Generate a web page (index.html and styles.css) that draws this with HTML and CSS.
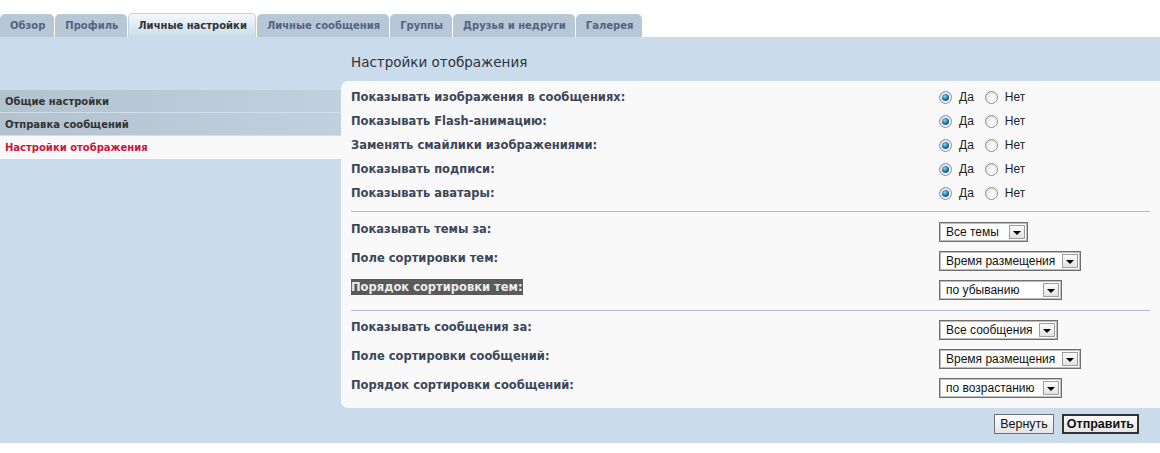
FILE: index.html
```html
<!DOCTYPE html>
<html>
<head>
	<meta charset="utf-8">
	<title>Личный раздел — Настройки отображения</title>
	<link rel="stylesheet" href="styles.css">
</head>
<body>
	<ul class="tabs">
		<li><a>Обзор</a></li>
		<li><a>Профиль</a></li>
		<li class="active"><a>Личные настройки</a></li>
		<li><a>Личные сообщения</a></li>
		<li><a>Группы</a></li>
		<li><a>Друзья и недруги</a></li>
		<li><a>Галерея</a></li>
	</ul>

	<div class="cp-main">
		<div class="cp-menu">
			<ul class="nav">
				<li><a>Общие настройки</a></li>
				<li><a>Отправка сообщений</a></li>
				<li class="active"><a>Настройки отображения</a></li>
			</ul>
		</div>

		<div class="cp-content">
			<h2>Настройки отображения</h2>

			<div class="panel">
				<div class="group group-radios">
					<div class="row">
						<span class="label">Показывать изображения в сообщениях:</span>
						<span class="choices"><span class="radio checked"></span><span class="opt">Да</span><span class="radio"></span><span class="opt">Нет</span></span>
					</div>
					<div class="row">
						<span class="label">Показывать Flash-анимацию:</span>
						<span class="choices"><span class="radio checked"></span><span class="opt">Да</span><span class="radio"></span><span class="opt">Нет</span></span>
					</div>
					<div class="row">
						<span class="label">Заменять смайлики изображениями:</span>
						<span class="choices"><span class="radio checked"></span><span class="opt">Да</span><span class="radio"></span><span class="opt">Нет</span></span>
					</div>
					<div class="row">
						<span class="label">Показывать подписи:</span>
						<span class="choices"><span class="radio checked"></span><span class="opt">Да</span><span class="radio"></span><span class="opt">Нет</span></span>
					</div>
					<div class="row">
						<span class="label">Показывать аватары:</span>
						<span class="choices"><span class="radio checked"></span><span class="opt">Да</span><span class="radio"></span><span class="opt">Нет</span></span>
					</div>
				</div>

				<hr class="sep">

				<div class="group group-selects">
					<div class="row">
						<span class="label">Показывать темы за:</span>
						<span class="select sel-days-topics"><span class="sel-text">Все темы</span><span class="arrow"></span></span>
					</div>
					<div class="row">
						<span class="label">Поле сортировки тем:</span>
						<span class="select sel-key"><span class="sel-text">Время размещения</span><span class="arrow"></span></span>
					</div>
					<div class="row">
						<span class="label"><span class="marked">Порядок сортировки тем:</span></span>
						<span class="select sel-dir"><span class="sel-text">по убыванию</span><span class="arrow"></span></span>
					</div>
				</div>

				<hr class="sep">

				<div class="group group-selects">
					<div class="row">
						<span class="label">Показывать сообщения за:</span>
						<span class="select sel-days-posts"><span class="sel-text">Все сообщения</span><span class="arrow"></span></span>
					</div>
					<div class="row">
						<span class="label">Поле сортировки сообщений:</span>
						<span class="select sel-key"><span class="sel-text">Время размещения</span><span class="arrow"></span></span>
					</div>
					<div class="row">
						<span class="label">Порядок сортировки сообщений:</span>
						<span class="select sel-dir"><span class="sel-text">по возрастанию</span><span class="arrow"></span></span>
					</div>
				</div>
			</div>

			<div class="submit-row">
				<button class="btn">Вернуть</button>
				<button class="btn btn-main">Отправить</button>
			</div>
		</div>
	</div>
</body>
</html>
```

FILE: styles.css
```css
* {
	box-sizing: border-box;
}

body {
	margin: 0;
	padding-top: 13px;
	background-color: #ffffff;
	font-family: "DejaVu Sans", Verdana, sans-serif;
	color: #333333;
}

/* tabs */
.tabs {
	display: flex;
	align-items: flex-end;
	list-style: none;
	margin: 0;
	padding: 0;
	height: 24px;
}

.tabs li {
	margin-right: 1px;
}

.tabs a {
	display: block;
	height: 23px;
	line-height: 23px;
	padding: 0 9px 0 10px;
	font-size: 10px;
	font-weight: bold;
	color: #536482;
	background-color: #b7c7d6;
	border-radius: 5px 5px 0 0;
}

.tabs li.active a {
	height: 24px;
	line-height: 24px;
	color: #333333;
	background: linear-gradient(#f4f8fc, #cadceb);
	border: 1px solid #c4d3e1;
	border-bottom: none;
	padding: 0 8px 0 9px;
}

/* main area */
.cp-main {
	display: flex;
	background-color: #cadceb;
	height: 406px;
}

.cp-menu {
	width: 341px;
	flex-shrink: 0;
	padding-top: 53px;
}

.nav {
	list-style: none;
	margin: 0;
	padding: 0;
}

.nav li a {
	display: block;
	height: 23px;
	line-height: 23px;
	padding-left: 5px;
	font-size: 10px;
	font-weight: bold;
	color: #333333;
	background: linear-gradient(to right, #b2c2cf, #c0d0de);
	border-bottom: 1px solid #d2dee8;
}

.nav li.active a {
	background: #f9f9f9;
	color: #c8173f;
	border-bottom: none;
}

.cp-content {
	flex-grow: 1;
	display: flex;
	flex-direction: column;
}

.cp-content h2 {
	margin: 15px 0 9px 10px;
	height: 20px;
	line-height: 20px;
	font-size: 13.5px;
	font-weight: normal;
	color: #2d333d;
}

.panel {
	background-color: #f9f9f9;
	border-radius: 7px 0 0 7px;
	padding: 4px 10px 5px 10px;
}

.row {
	display: flex;
}

.label {
	width: 588px;
	flex-shrink: 0;
	font-size: 11.5px;
	font-weight: bold;
	color: #3c4658;
}

.group-radios .row {
	height: 24px;
	align-items: center;
}

.group-selects .row {
	height: 29px;
	align-items: flex-start;
	padding-top: 4px;
}

.group-selects .label {
	line-height: 15px;
}

.marked {
	background-color: #5a5a5a;
	color: #ececec;
	padding: 1px 0;
}

.sep {
	border: none;
	border-top: 1px solid #b4bcc6;
	margin: 6px 0;
	height: 0;
}

.group-selects + .sep {
	margin: 5px 0;
}

/* radio buttons */
.choices {
	display: flex;
	align-items: center;
	font-family: "Liberation Sans", Arial, sans-serif;
	font-size: 12px;
	color: #222222;
}

.radio {
	width: 13px;
	height: 13px;
	border-radius: 50%;
	border: 1px solid #8e8f8f;
	background: radial-gradient(circle at 60% 65%, #ffffff 20%, #dcdcdc 80%);
	display: flex;
	align-items: center;
	justify-content: center;
	margin-right: 7px;
}

.radio.checked::after {
	content: "";
	width: 7px;
	height: 7px;
	border-radius: 50%;
	background: radial-gradient(circle at 40% 35%, #8ed2f4, #1c6aa3 55%, #0e3f66);
}

.opt {
	margin-right: 11px;
}

/* selects */
.select {
	display: flex;
	align-items: center;
	height: 20px;
	border: 1px solid #6f6f6f;
	box-shadow: inset 0 0 0 1px #bdbdbd;
	background-color: #ffffff;
	padding: 0 2px 0 6px;
	font-family: "Liberation Sans", Arial, sans-serif;
	font-size: 12px;
	color: #111111;
}

.sel-text {
	flex-grow: 1;
	white-space: nowrap;
}

.arrow {
	width: 16px;
	height: 14px;
	border: 1px solid #9d9d9d;
	background: linear-gradient(#fbfbfb, #e2e2e2);
	display: flex;
	align-items: center;
	justify-content: center;
	margin-left: 3px;
}

.arrow::after {
	content: "";
	border-left: 4px solid transparent;
	border-right: 4px solid transparent;
	border-top: 4px solid #000000;
	margin-top: 2px;
}

.sel-days-topics { width: 89px; }
.sel-key { width: 142px; }
.sel-dir { width: 123px; }
.sel-days-posts { width: 119px; }

/* buttons */
.submit-row {
	display: flex;
	justify-content: flex-end;
	gap: 8px;
	padding: 6px 21px 0 0;
}

.btn {
	height: 20px;
	padding: 0 5px;
	font-family: "Liberation Sans", Arial, sans-serif;
	font-size: 12.5px;
	color: #111111;
	background: linear-gradient(#fdfdfd, #e4e4e4);
	border: 1px solid #6e6e6e;
	border-radius: 0;
}

.btn-main {
	font-weight: bold;
	border: 2px solid #333333;
	padding: 0 3px;
}
```
